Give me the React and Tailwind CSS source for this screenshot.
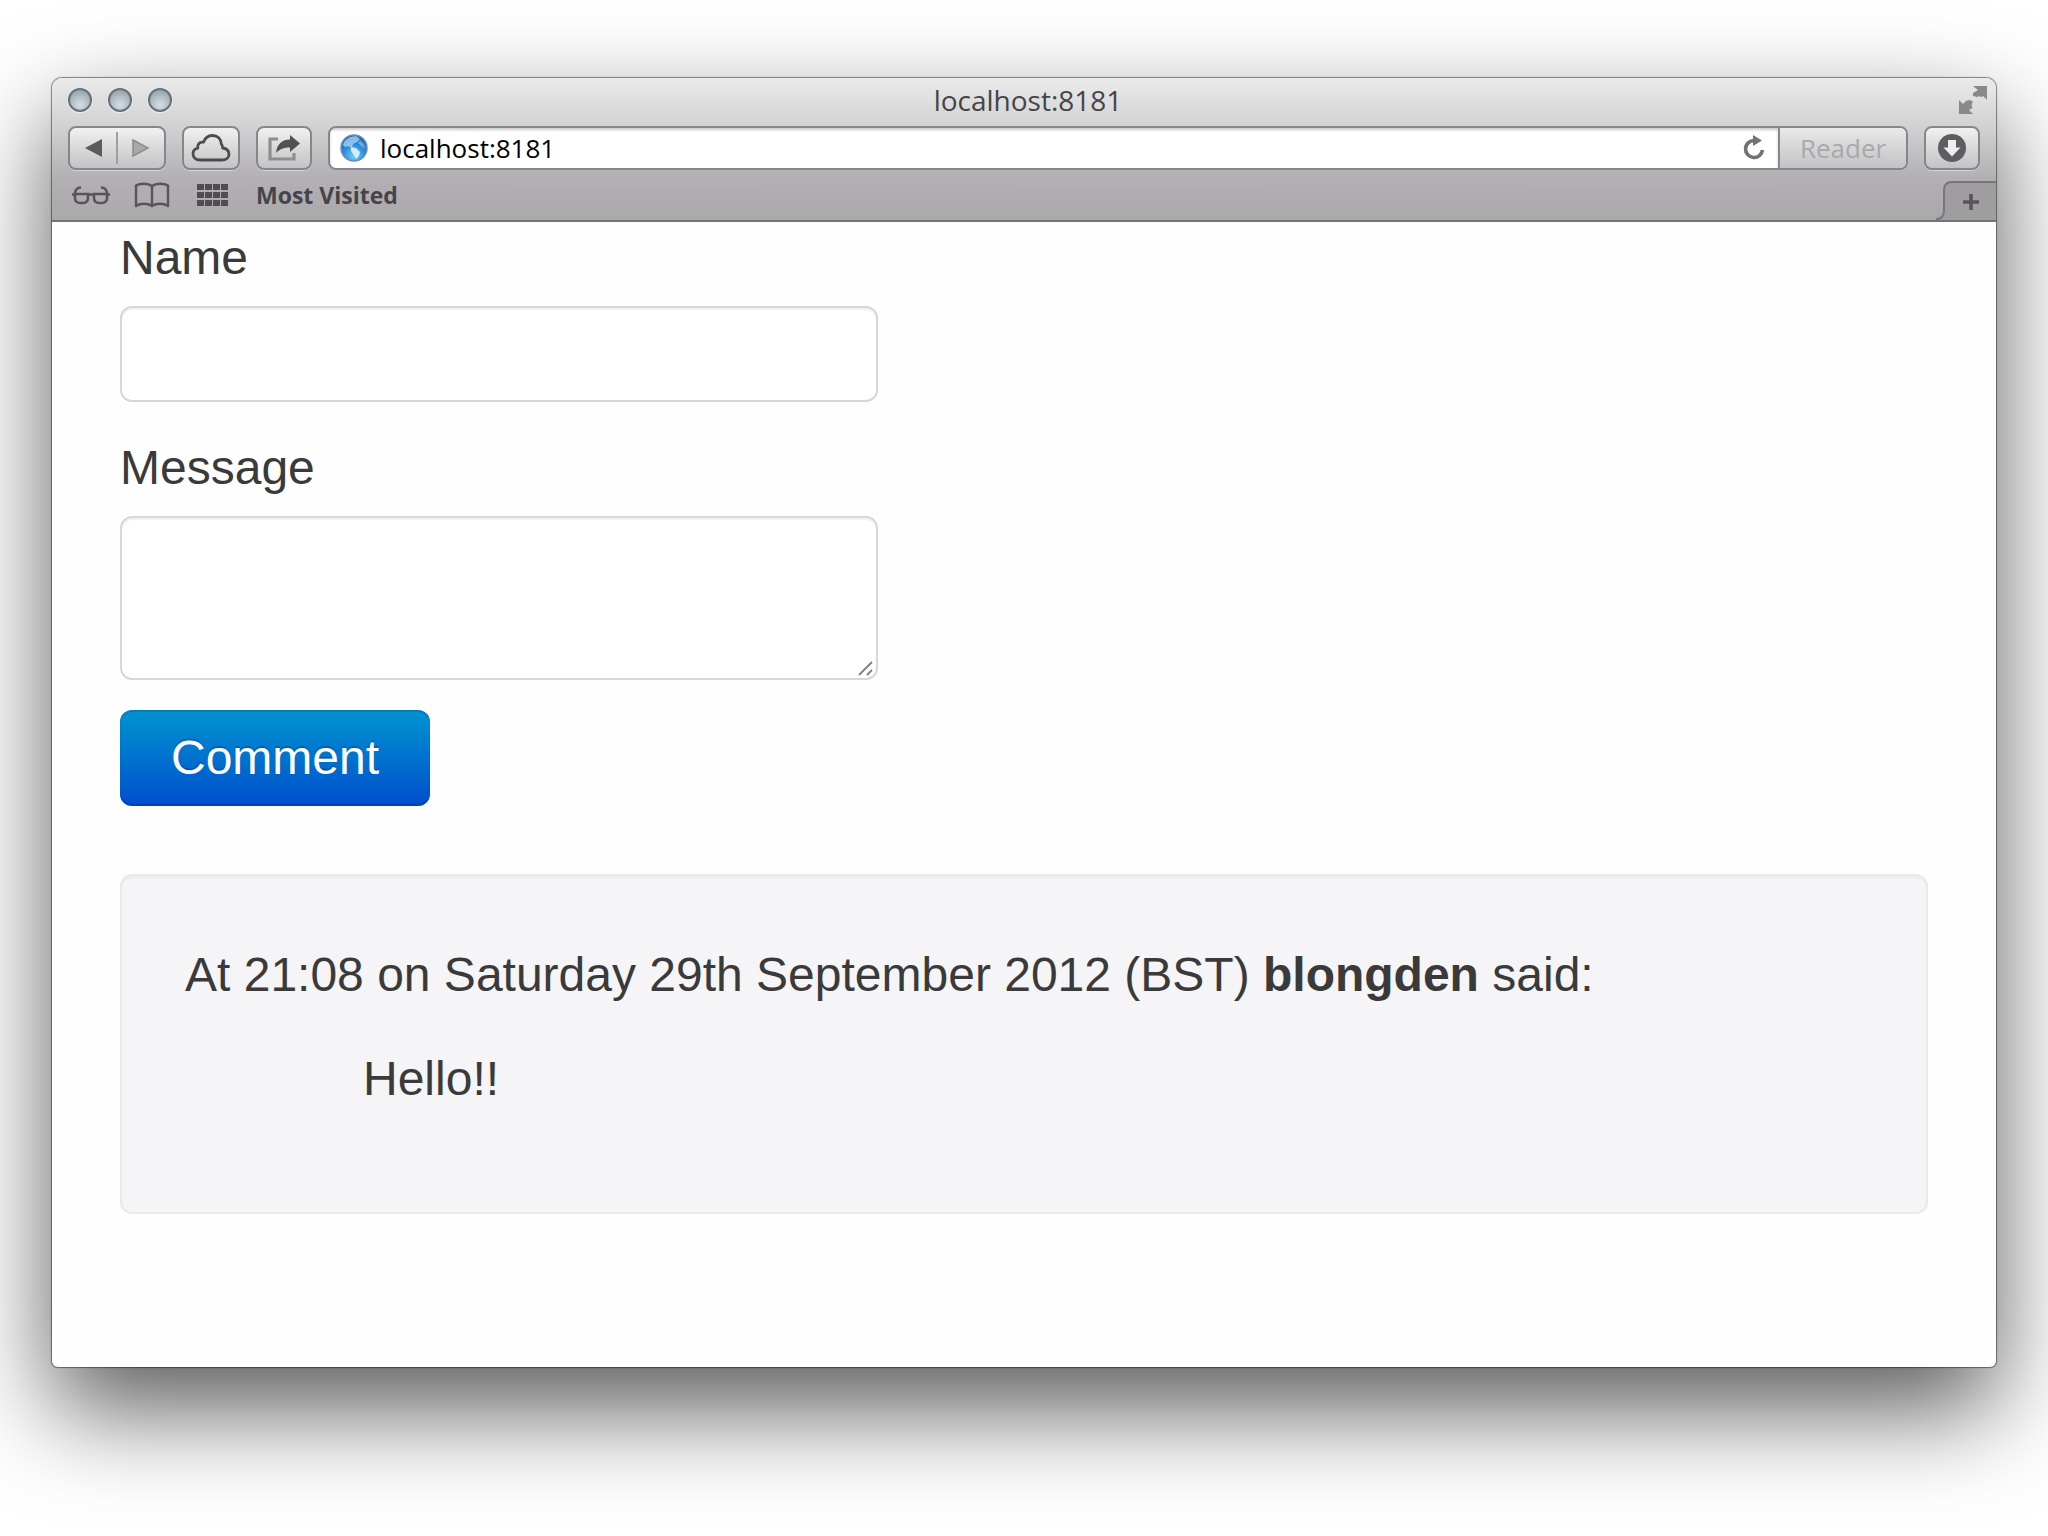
import React from "react";

const uiFont = "font-['Open_Sans','Noto_Sans',sans-serif]";

function TrafficLight({ label }) {
  return (
    <button
      type="button"
      aria-label={label}
      className="size-6 rounded-full border-2 border-[#66717a] bg-[radial-gradient(circle_at_50%_75%,#d3dde3_0%,#b3c0c8_45%,#8b99a3_100%)] shadow-[0_1px_1px_rgba(255,255,255,0.7)]"
    />
  );
}

function ToolButton({ label, className, children }) {
  return (
    <button
      type="button"
      aria-label={label}
      className={
        "flex h-11 items-center justify-center rounded-lg border-2 border-[#88868a] bg-linear-to-b from-[#f1f1f1] to-[#c3c2c4] shadow-[0_1px_0_rgba(255,255,255,0.4)] " +
        className
      }
    >
      {children}
    </button>
  );
}

function Globe() {
  return (
    <svg width="28" height="28" viewBox="0 0 28 28" className="shrink-0">
      <defs>
        <radialGradient id="globe" cx="50%" cy="80%" r="80%">
          <stop offset="0" stopColor="#6fd0f6" />
          <stop offset="0.5" stopColor="#2f8fdc" />
          <stop offset="1" stopColor="#1757aa" />
        </radialGradient>
      </defs>
      <circle cx="14" cy="14" r="13" fill="url(#globe)" stroke="#6b8cb4" strokeWidth="1.5" />
      <path d="M4 8c3-4 7-6 12-6l4 3-3 3-4 2-1 4-4-2-3 1-2-2z" fill="#a9d8f5" opacity="0.75" />
      <path d="M11 13l5 1 4 4-1 4-3 3-2-4-3-4z" fill="#e2f5fd" opacity="0.9" />
      <path d="M20 6l4 4 1 5-4-3-3-3z" fill="#8fcaf0" opacity="0.6" />
    </svg>
  );
}

export default function App() {
  return (
    <div className="min-h-screen overflow-hidden bg-white px-[52px] pt-[78px] pb-[168px]">
      <main className="overflow-hidden rounded-t-[10px] rounded-b-md bg-[#fefefe] shadow-[0_0_1px_1px_rgba(0,0,0,0.45),0_42px_100px_rgba(0,0,0,0.65)]">
        <header
          className={
            "border-b-2 border-[#757376] bg-[linear-gradient(to_bottom,#ebebeb_0px,#d2d1d3_48px,#b2b0b3_100px,#aaa8ab_144px)] " +
            uiFont
          }
        >
          <div className="mb-1 grid h-11 grid-cols-[1fr_auto_1fr] items-center pr-2 pl-4">
            <div className="flex gap-4">
              <TrafficLight label="Close" />
              <TrafficLight label="Minimise" />
              <TrafficLight label="Zoom" />
            </div>
            <h1 className="text-[28px] leading-8 text-[#454545]">localhost:8181</h1>
            <button type="button" aria-label="Full screen" className="justify-self-end">
              <svg width="30" height="30" viewBox="0 0 30 30" fill="#8a888c">
                <path d="M15 1h14v14l-4-4-2 1.500-1-1.500-3 1-4-1 0-3 5-3z" />
                <path d="M1 15l4 4 3-3 3.500-1 3.500 1.500-1.500 3.500 1 3-3.500 2 4 4H1z" />
              </svg>
            </button>
          </div>

          <div className="flex items-center gap-4 px-4">
            <div className="flex h-11 w-[98px] items-center rounded-lg border-2 border-[#88868a] bg-linear-to-b from-[#f1f1f1] to-[#c3c2c4] shadow-[0_1px_0_rgba(255,255,255,0.4)]">
              <button type="button" aria-label="Back" className="flex h-full flex-1 items-center justify-center">
                <svg width="18" height="20" viewBox="0 0 18 20">
                  <path d="M1 10L18 1v18z" fill="#5c5a5e" />
                </svg>
              </button>
              <span className="h-8 w-0.5 bg-[#a09ea1]" />
              <button type="button" aria-label="Forward" className="flex h-full flex-1 items-center justify-center">
                <svg width="18" height="20" viewBox="0 0 18 20">
                  <path d="M1 2l15 8L1 18z" fill="#aaa8ab" stroke="#8d8b8f" strokeWidth="1.500" />
                </svg>
              </button>
            </div>
            <ToolButton label="iCloud tabs" className="w-[58px]">
              <svg width="40" height="30" viewBox="0 0 40 30" fill="none" stroke="#4d4b4f" strokeWidth="2.8" strokeLinejoin="round">
                <path d="M9 27C4.500 27 2 24.200 2 20.800c0-3 2-5 4.800-5.600C6 11.500 8.800 8.500 12.500 9.200 14 5 17.500 2.500 21.500 2.500c5 0 8.500 3.500 8.800 8.500 1.200 1.200 1.500 2.500 1.200 4C35.500 15.500 38 18 38 21.200 38 24.500 35.500 27 31.500 27z" />
              </svg>
            </ToolButton>
            <ToolButton label="Share" className="w-[56px]">
              <svg width="34" height="28" viewBox="0 0 34 28">
                <path d="M11 5H3v20h24v-6" fill="none" stroke="#8f8d90" strokeWidth="3.200" />
                <path d="M9 19C10 10 15 5.500 23 5.500V1l10 8.500L23 18v-4.500c-6 0-10 1.500-14 5.500z" fill="#525054" />
              </svg>
            </ToolButton>

            <div className="flex h-11 flex-1 items-stretch overflow-hidden rounded-lg border-2 border-[#88868a] bg-white">
              <div className="flex flex-1 items-center gap-3 pr-3 pl-2.5 shadow-[inset_0_2px_3px_rgba(0,0,0,0.2)]">
                <Globe />
                <input
                  aria-label="Address"
                  defaultValue="localhost:8181"
                  className="min-w-0 flex-1 bg-transparent text-[26px] leading-8 text-black outline-none"
                />
                <button type="button" aria-label="Reload">
                  <svg width="24" height="28" viewBox="0 0 24 28">
                    <path d="M20.500 16a8.500 8.500 0 1 1-8.500-9.500" fill="none" stroke="#737175" strokeWidth="3.600" />
                    <path d="M11 1l9 5.500-9 5.500z" fill="#737175" />
                  </svg>
                </button>
              </div>
              <button
                type="button"
                className="w-32 border-l-2 border-[#88868a] bg-linear-to-b from-[#e9e9e9] to-[#c3c2c4] text-[26px] leading-8 text-[#a9a8aa]"
              >
                Reader
              </button>
            </div>

            <ToolButton label="Downloads" className="w-[56px]">
              <svg width="30" height="30" viewBox="0 0 30 30">
                <circle cx="15" cy="15" r="14" fill="#5f5d61" />
                <path d="M11 7h8v7.500h4.500L15 23.500 6.500 14.500H11z" fill="#eeeeee" />
              </svg>
            </ToolButton>
          </div>

          <nav className="flex h-[50px] items-end justify-between">
            <div className="flex h-full items-center gap-6 pl-5">
              <button type="button" aria-label="Reading list">
                <svg width="38" height="20" viewBox="0 0 38 20" fill="none" stroke="#57555a" strokeWidth="2.600">
                  <path d="M3 9h13v4c0 3-2 5-5 5H8c-3 0-5-2-5-5zM22 9h13v4c0 3-2 5-5 5h-3c-3 0-5-2-5-5z" />
                  <path d="M16 9.500h6M0 9.500h4M34 9.500h4M3 9C3 5 5 2.500 9 2.500M35 9c0-4-2-6.500-6-6.500" />
                </svg>
              </button>
              <button type="button" aria-label="Bookmarks">
                <svg width="36" height="26" viewBox="0 0 36 26" fill="none" stroke="#57555a" strokeWidth="2.400" strokeLinejoin="round">
                  <path d="M18 4C14 1 6 1 2 3.500V24c4-3 12-3 16 0 4-3 12-3 16 0V3.500C30 1 22 1 18 4zM18 4v20" />
                </svg>
              </button>
              <button type="button" aria-label="Top sites" className="pr-1">
                <svg width="34" height="24" viewBox="0 0 34 24" fill="#4f4d51">
                  {[0, 8, 16].map((y) =>
                    [0, 8, 16, 24].map((x) => <rect key={x + "-" + y} x={x + 3} y={y + 1} width="7" height="6" />)
                  )}
                </svg>
              </button>
              <a href="#most-visited" className="text-[23px] leading-8 font-bold text-[#464448]">
                Most Visited
              </a>
            </div>
            <button type="button" aria-label="New tab" className="flex h-[39px] items-stretch">
              <svg width="20" height="39" viewBox="0 0 20 39">
                <path d="M20 1h-4c-6 0-8 3-8 8v20c0 6-3 9-8 9v1h20z" fill="#9f9da0" />
                <path d="M20 1h-4c-6 0-8 3-8 8v20c0 6-3 9-8 9" fill="none" stroke="#78767a" strokeWidth="2" />
              </svg>
              <span className="flex w-10 items-center border-t-2 border-[#78767a] bg-[#9f9da0] pl-1.5">
                <svg width="18" height="18" viewBox="0 0 18 18" stroke="#57555a" strokeWidth="3.600">
                  <path d="M9 1v16M1 9h16" />
                </svg>
              </span>
            </button>
          </nav>
        </header>

        <div className="px-[68px] pt-0.5 pb-[153px] font-['Liberation_Sans',Arial,sans-serif] text-5xl leading-[68px] text-[#3a3a3a]">
          <form onSubmit={(e) => e.preventDefault()}>
            <label htmlFor="name" className="mb-3.5 block">
              Name
            </label>
            <input
              id="name"
              type="text"
              className="mb-8 block h-24 w-[758px] max-w-full rounded-xl border-2 border-[#d8d6da] bg-white px-5 shadow-[inset_0_2px_1px_rgba(0,0,0,0.06)] outline-none"
            />
            <label htmlFor="message" className="mb-3.5 block">
              Message
            </label>
            <div className="relative mb-[30px] w-[758px] max-w-full">
              <textarea
                id="message"
                className="block h-[164px] w-full resize-none rounded-xl border-2 border-[#d8d6da] bg-white px-5 shadow-[inset_0_2px_1px_rgba(0,0,0,0.06)] outline-none"
              />
              <svg
                width="16"
                height="16"
                viewBox="0 0 16 16"
                className="pointer-events-none absolute right-1 bottom-1"
                stroke="#858387"
                strokeWidth="2"
              >
                <path d="M1 15L14 2M9 15l5-5" />
              </svg>
            </div>
            <button
              type="submit"
              className="mb-[68px] block h-24 rounded-xl bg-linear-to-b from-[#0593d0] to-[#004dcc] px-[51px] text-white shadow-[inset_0_2px_1px_rgba(0,90,150,0.4),inset_0_-2px_1px_rgba(0,50,140,0.4)] [text-shadow:0_-2px_0_rgba(0,0,0,0.2)]"
            >
              Comment
            </button>
          </form>

          <article className="rounded-xl border-2 border-[#ebe9ec] bg-[#f5f4f7] px-[63px] pt-[65px] pb-[99px] shadow-[inset_0_2px_2px_rgba(0,0,0,0.04)]">
            <p className="mb-9">
              At 21:08 on Saturday 29th September 2012 (BST) <strong className="font-bold">blongden</strong> said:
            </p>
            <blockquote className="pl-[178px]">Hello!!</blockquote>
          </article>
        </div>
      </main>
    </div>
  );
}
